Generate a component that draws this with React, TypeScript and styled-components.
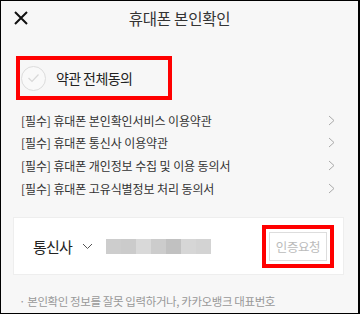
import styled, { createGlobalStyle } from "styled-components";

const GlobalStyle = createGlobalStyle`
  html, body {
    margin: 0;
    padding: 0;
  }
  body {
    font-family: "Noto Sans CJK KR", "Noto Sans", sans-serif;
  }
`;

const Screen = styled.div`
  width: 360px;
  height: 314px;
  box-sizing: border-box;
  border: 1px solid #000;
  border-right-width: 2px;
  background: #f7f7f7;
  overflow: hidden;
  display: flex;
  flex-direction: column;
`;

const Header = styled.div`
  height: 33px;
  display: flex;
  align-items: center;
  justify-content: center;
  position: relative;
  flex-shrink: 0;
`;

const CloseButton = styled.button`
  position: absolute;
  left: 11px;
  top: 8px;
  width: 18px;
  height: 18px;
  padding: 0;
  border: none;
  background: none;
  display: flex;
  align-items: center;
  justify-content: center;
`;

const Title = styled.h1`
  margin: 0;
  font-size: 15.5px;
  font-weight: 400;
  color: #333;
  letter-spacing: -0.2px;
`;

const Content = styled.div`
  padding: 0 13px 0 12px;
  display: flex;
  flex-direction: column;
`;

const Highlight = styled.div`
  border: 4px solid #ff0000;
  box-sizing: border-box;
`;

const AgreeAll = styled(Highlight)`
  margin: 22px 0 0 3px;
  width: 156px;
  height: 44px;
  display: flex;
  align-items: center;
  gap: 10px;
  padding-left: 1px;
`;

const CheckCircle = styled.span`
  width: 25px;
  height: 25px;
  border-radius: 50%;
  border: 1px solid #dcdcdc;
  box-sizing: border-box;
  background: #f9f9f9;
  display: flex;
  align-items: center;
  justify-content: center;
`;

const AgreeLabel = styled.span`
  font-size: 14px;
  color: #222;
  letter-spacing: -0.6px;
`;

const TermList = styled.ul`
  list-style: none;
  margin: 9px 0 0;
  padding: 0 0 0 8px;
`;

const TermRow = styled.li`
  height: 22.6px;
  display: flex;
  align-items: center;
  justify-content: space-between;
  font-size: 12px;
  color: #333;
  letter-spacing: -0.1px;
  padding-right: 10px;
`;

const Card = styled.div`
  margin: 18px 1px 0 0;
  height: 58px;
  background: #fff;
  border: 1px solid #eee;
  box-sizing: border-box;
  display: flex;
  align-items: center;
  padding: 0 9px 0 19px;
`;

const Carrier = styled.span`
  font-size: 15px;
  color: #222;
  letter-spacing: -0.8px;
`;

const Caret = styled.span`
  margin-left: 10px;
  display: flex;
  align-items: center;
`;

const Masked = styled.div`
  margin-left: 13px;
  display: flex;
  height: 15px;
`;

const MaskCell = styled.span<{ $tone: string }>`
  width: 15px;
  height: 100%;
  background: ${(p) => p.$tone};
`;

const RequestFrame = styled(Highlight)`
  margin-left: auto;
  width: 72px;
  height: 43px;
  padding: 3px;
  display: flex;
`;

const RequestButton = styled.button`
  flex: 1;
  margin: 0;
  border: 1px solid #ddd;
  background: #fff;
  color: #bbb;
  font-family: inherit;
  font-size: 12.5px;
  letter-spacing: -0.4px;
  padding: 0;
`;

const Notice = styled.p`
  margin: 18px 0 0 6px;
  font-size: 11.5px;
  color: #999;
  letter-spacing: -0.4px;
  white-space: nowrap;
`;

const terms = [
  "[필수] 휴대폰 본인확인서비스 이용약관",
  "[필수] 휴대폰 통신사 이용약관",
  "[필수] 휴대폰 개인정보 수집 및 이용 동의서",
  "[필수] 휴대폰 고유식별정보 처리 동의서",
];

const maskTones = ["#cdcdcd", "#cbcbcb", "#d9d9d9", "#cccccc", "#c1c1c1", "#d6d6d6", "#d3d3d3"];

function App() {
  return (
    <>
      <GlobalStyle />
      <Screen>
        <Header>
          <CloseButton aria-label="닫기">
            <svg width="16" height="16" viewBox="0 0 16 16">
              <path d="M2 2 L14 14 M14 2 L2 14" stroke="#111" strokeWidth="2" />
            </svg>
          </CloseButton>
          <Title>휴대폰 본인확인</Title>
        </Header>
        <Content>
          <AgreeAll>
            <CheckCircle>
              <svg width="13" height="10" viewBox="0 0 13 10">
                <path d="M1.5 5 L5 8.5 L11.5 1.5" fill="none" stroke="#d8d8d8" strokeWidth="1.2" />
              </svg>
            </CheckCircle>
            <AgreeLabel>약관 전체동의</AgreeLabel>
          </AgreeAll>
          <TermList>
            {terms.map((t) => (
              <TermRow key={t}>
                <span>{t}</span>
                <svg width="7" height="11" viewBox="0 0 7 11">
                  <path d="M1 1 L6 5.5 L1 10" fill="none" stroke="#aaa" strokeWidth="1" />
                </svg>
              </TermRow>
            ))}
          </TermList>
          <Card>
            <Carrier>통신사</Carrier>
            <Caret>
              <svg width="11" height="7" viewBox="0 0 11 7">
                <path d="M1 1 L5.5 5.5 L10 1" fill="none" stroke="#555" strokeWidth="1" />
              </svg>
            </Caret>
            <Masked>
              {maskTones.map((c, i) => (
                <MaskCell key={i} $tone={c} />
              ))}
            </Masked>
            <RequestFrame>
              <RequestButton>인증요청</RequestButton>
            </RequestFrame>
          </Card>
          <Notice>· 본인확인 정보를 잘못 입력하거나, 카카오뱅크 대표번호</Notice>
        </Content>
      </Screen>
    </>
  );
}

export default App;
